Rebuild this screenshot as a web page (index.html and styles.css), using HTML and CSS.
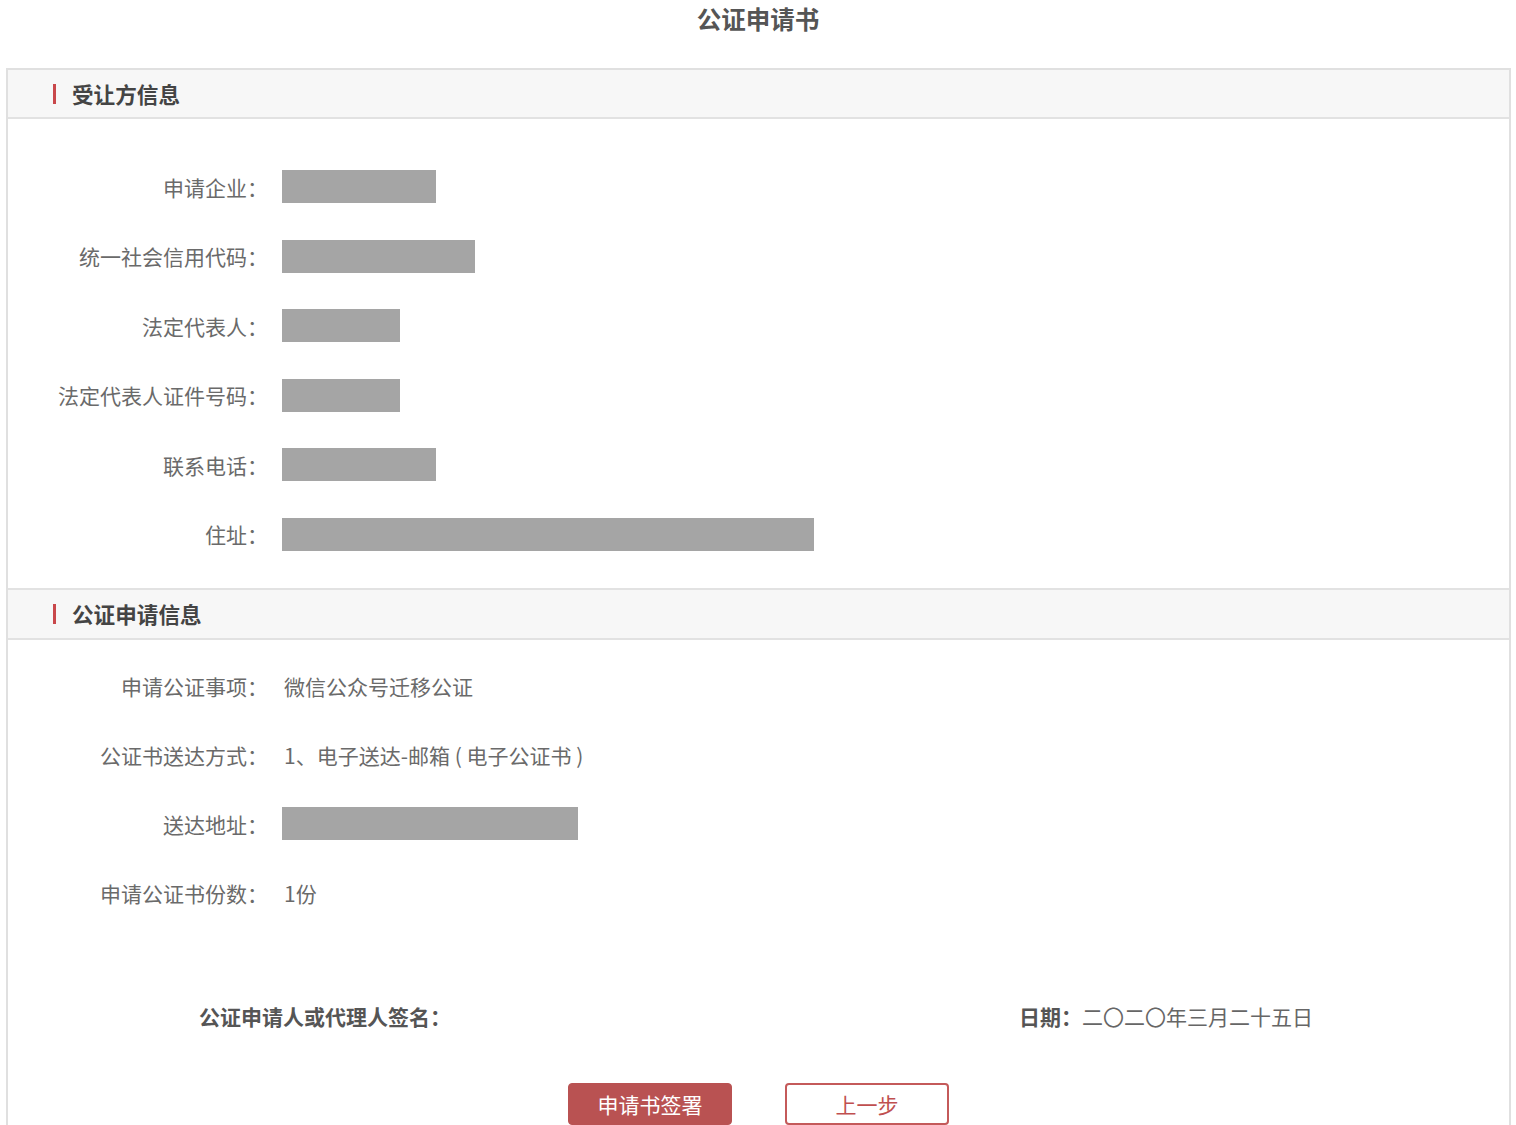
FILE: index.html
```html
<!DOCTYPE html>
<html lang="zh-CN">
<head>
<meta charset="utf-8">
<title>公证申请书</title>
<link rel="stylesheet" href="styles.css">
</head>
<body>
<h1 class="title">公证申请书</h1>
<div class="panel">
  <div class="sec-head first"><span class="bar"></span><span class="sec-title">受让方信息</span></div>
  <div class="sec-body body1">
    <div class="row"><div class="label">申请企业：</div><div class="mask" style="width:154px"></div></div>
    <div class="row"><div class="label">统一社会信用代码：</div><div class="mask" style="width:193px"></div></div>
    <div class="row"><div class="label">法定代表人：</div><div class="mask" style="width:118px"></div></div>
    <div class="row"><div class="label">法定代表人证件号码：</div><div class="mask" style="width:118px"></div></div>
    <div class="row"><div class="label">联系电话：</div><div class="mask" style="width:154px"></div></div>
    <div class="row"><div class="label">住址：</div><div class="mask" style="width:532px"></div></div>
  </div>
  <div class="sec-head"><span class="bar"></span><span class="sec-title">公证申请信息</span></div>
  <div class="sec-body body2">
    <div class="row"><div class="label">申请公证事项：</div><div class="value">微信公众号迁移公证</div></div>
    <div class="row"><div class="label">公证书送达方式：</div><div class="value">1、电子送达-邮箱 ( 电子公证书 )</div></div>
    <div class="row"><div class="label">送达地址：</div><div class="mask" style="width:296px"></div></div>
    <div class="row"><div class="label">申请公证书份数：</div><div class="value">1份</div></div>
    <div class="sign">
      <div class="sign-left">公证申请人或代理人签名：</div>
      <div class="sign-date"><b>日期：</b>二〇二〇年三月二十五日</div>
    </div>
    <div class="actions">
      <button class="btn btn-primary" type="button">申请书签署</button>
      <button class="btn btn-outline" type="button">上一步</button>
    </div>
  </div>
</div>
</body>
</html>
```

FILE: styles.css
```css
html, body {
  margin: 0;
  padding: 0;
  background: #fff;
  font-family: "Noto Sans CJK SC", "Microsoft YaHei", "Noto Sans", sans-serif;
  color: #666;
}

.title {
  margin: 0;
  height: 38px;
  line-height: 38px;
  text-align: center;
  font-size: 24.5px;
  font-weight: bold;
  color: #555;
}

.panel {
  margin: 30px 5px 0 6px;
  border: 2px solid #e0e0e0;
  border-bottom: none;
  min-height: 1100px;
}

.sec-head {
  height: 48px;
  background: #f7f7f7;
  border-top: 2px solid #e2e2e2;
  border-bottom: 2px solid #e2e2e2;
  display: flex;
  align-items: center;
  padding-left: 45px;
}

.sec-head.first {
  border-top: none;
  height: 47px;
}

.bar {
  width: 3px;
  height: 20px;
  background: #c9484b;
  margin-right: 16px;
}

.sec-title {
  font-size: 21.6px;
  font-weight: bold;
  color: #444;
}

.sec-body {
  display: flex;
  flex-direction: column;
}

.body1 {
  padding: 51px 0 37px;
  gap: 36.6px;
}

.body2 {
  padding: 29.5px 0 0;
  gap: 36px;
}

.row {
  display: flex;
  align-items: center;
  height: 33px;
}

.label {
  width: 260px;
  text-align: right;
  font-size: 21px;
  color: #6a6a6a;
  white-space: nowrap;
  flex: none;
}

.mask {
  margin-left: 14px;
  height: 33px;
  background: #a5a5a5;
}

.value {
  margin-left: 16px;
  font-size: 21px;
  color: #6a6a6a;
  white-space: nowrap;
}

.sign {
  display: flex;
  align-items: center;
  height: 33px;
  margin-top: 54px;
  padding-left: 191px;
  font-size: 21px;
}

.sign-left {
  width: 820px;
  font-weight: bold;
  color: #555;
}

.sign-date {
  color: #666;
}

.sign-date b {
  color: #555;
}

.actions {
  display: flex;
  justify-content: center;
  gap: 53px;
  margin-top: 14.5px;
}

.btn {
  width: 164px;
  height: 42px;
  border-radius: 4px;
  font-family: inherit;
  font-size: 21px;
  padding: 0;
  cursor: pointer;
}

.btn-primary {
  background: #b95252;
  border: 1px solid #b95252;
  color: #fff;
}

.btn-outline {
  background: #fff;
  border: 2px solid #c45a5a;
  color: #c04f4f;
}
```
